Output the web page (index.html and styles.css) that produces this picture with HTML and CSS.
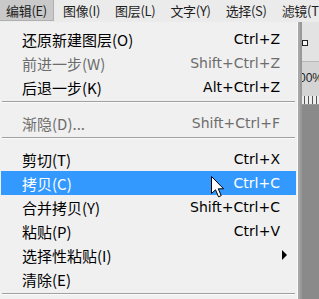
FILE: index.html
```html
<!DOCTYPE html>
<html lang="zh-CN">
<head>
    <meta charset="UTF-8">
    <title>编辑菜单</title>
    <link rel="stylesheet" href="styles.css">
</head>
<body>
    <div class="app">
        <div class="menubar">
            <span class="mb-item active">编辑(E)</span>
            <span class="mb-item">图像(I)</span>
            <span class="mb-item">图层(L)</span>
            <span class="mb-item">文字(Y)</span>
            <span class="mb-item">选择(S)</span>
            <span class="mb-item">滤镜(T)</span>
        </div>
        <div class="workspace">
            <div class="options-bar">
                <svg class="handle" width="8" height="7" viewBox="0 0 8 7">
                    <rect x="2.5" y="0.5" width="5" height="5" fill="#f4f4f4" stroke="#222"/>
                    <line x1="0" y1="3" x2="2.5" y2="3" stroke="#222"/>
                </svg>
            </div>
            <div class="tab-row"><span class="zoom-text">00%</span></div>
            <div class="ruler"></div>
            <div class="canvas-area"></div>
        </div>

        <div class="menu">
            <div class="item"><span>还原新建图层(O)</span><span>Ctrl+Z</span></div>
            <div class="item disabled"><span>前进一步(W)</span><span>Shift+Ctrl+Z</span></div>
            <div class="item"><span>后退一步(K)</span><span>Alt+Ctrl+Z</span></div>
            <div class="sep"></div>
            <div class="item disabled"><span>渐隐(D)...</span><span>Shift+Ctrl+F</span></div>
            <div class="sep"></div>
            <div class="item"><span>剪切(T)</span><span>Ctrl+X</span></div>
            <div class="item hover"><span>拷贝(C)</span><span>Ctrl+C</span></div>
            <div class="item"><span>合并拷贝(Y)</span><span>Shift+Ctrl+C</span></div>
            <div class="item"><span>粘贴(P)</span><span>Ctrl+V</span></div>
            <div class="item"><span>选择性粘贴(I)</span><span class="arrow"></span></div>
            <div class="item"><span>清除(E)</span><span></span></div>
            <div class="sep"></div>
        </div>

        <svg class="cursor" width="14" height="23" viewBox="0 0 14 23">
            <path d="M0.5 0.5 L0.5 17.5 L4.5 13.8 L7.5 20.8 L10.2 19.7 L7.3 12.8 L12.6 12.8 Z" fill="#fff" stroke="#000" stroke-width="1"/>
        </svg>
    </div>
</body>
</html>
```

FILE: styles.css
```css
body {
    margin: 0;
    padding: 0;
    font-family: "Noto Sans CJK SC", "Noto Sans", sans-serif;
    background: #888;
}
.app {
    position: relative;
    width: 319px;
    height: 299px;
    overflow: hidden;
    background: #888;
}
.menubar {
    display: flex;
    height: 22px;
    background: #ebebeb;
    font-size: 13px;
    color: #1e1e1e;
    white-space: nowrap;
}
.mb-item {
    padding: 0 6px;
    margin-right: 3px;
    line-height: 21px;
    letter-spacing: -0.3px;
}
.mb-item.active {
    background: #c9c9c9;
    border-right: 1px solid #b0b0b0;
    border-bottom: 1px solid #b0b0b0;
    height: 20px;
}
.workspace {
    display: flex;
    flex-direction: column;
    height: 277px;
}
.options-bar {
    height: 40px;
    background: #e3e3e3;
    border-bottom: 1px solid #b8b8b8;
    padding-left: 300px;
    padding-top: 18px;
    box-sizing: border-box;
}
.handle {
    display: block;
}
.tab-row {
    height: 34px;
    background: #d4d4d4;
    padding-left: 299px;
    box-sizing: border-box;
    font-family: "Liberation Sans", sans-serif;
    font-size: 12px;
    color: #222;
    line-height: 20px;
    padding-top: 6px;
}
.ruler {
    height: 8px;
    background: repeating-linear-gradient(to right, #555 0 1px, #ededed 1px 4px);
    border-bottom: 1px solid #999;
}
.canvas-area {
    flex: 1;
    background: #8a8a8a;
}
.menu {
    position: absolute;
    left: 0;
    top: 22px;
    width: 298px;
    height: 277px;
    background: #f0f0f0;
    border-right: 1px solid #fafafa;
    box-shadow: 2px 0 0 #a7a7a7, 4px 0 0 #999;
    padding-top: 5px;
    box-sizing: border-box;
    font-size: 15px;
    color: #000;
}
.item {
    display: flex;
    justify-content: space-between;
    align-items: center;
    height: 24px;
    margin: 0 1px;
    padding: 0 16px 0 21px;
    white-space: nowrap;
}
.item span:last-child {
    font-family: "DejaVu Sans", sans-serif;
    font-size: 14px;
}
.item.disabled {
    color: #6d6d6d;
}
.item.hover {
    background: #3399ff;
    color: #fff;
}
.sep {
    height: 1px;
    background: #a0a0a0;
    border-bottom: 1px solid #fbfbfb;
    margin: 2px 2px 8px 2px;
}
.arrow {
    width: 0;
    height: 0;
    border-top: 5px solid transparent;
    border-bottom: 5px solid transparent;
    border-left: 5px solid #000;
    margin-right: -7px;
}
.cursor {
    position: absolute;
    left: 211px;
    top: 176px;
}
```
